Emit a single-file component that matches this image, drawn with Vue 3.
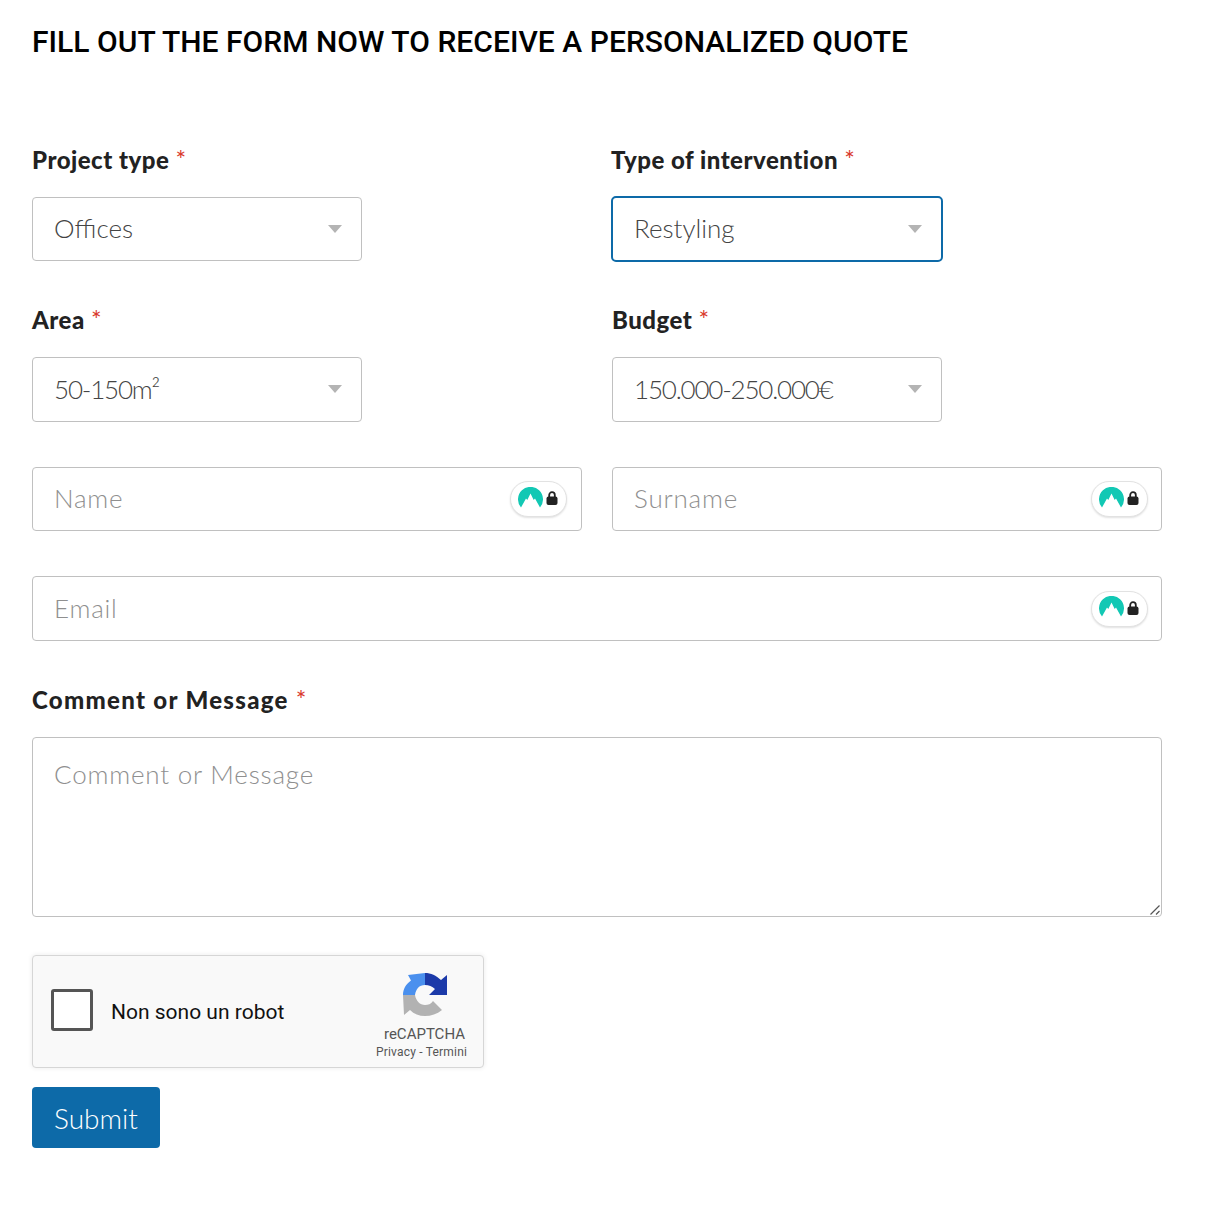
<template>
  <div class="page">
    <h2 class="title">FILL OUT THE FORM NOW TO RECEIVE A PERSONALIZED QUOTE</h2>

    <form class="quote-form" @submit.prevent>
      <div class="row selects first">
        <div v-for="f in topSelects" :key="f.label" class="field">
          <label class="label">{{ f.label }} <span class="req">*</span></label>
          <div class="select" :class="{ focused: f.focused }">
            <span class="value">{{ f.value }}</span>
            <span class="caret"></span>
          </div>
        </div>
      </div>

      <div class="row selects second">
        <div v-for="f in bottomSelects" :key="f.label" class="field">
          <label class="label">{{ f.label }} <span class="req">*</span></label>
          <div class="select">
            <span class="value tight">{{ f.value }}</span>
            <span class="caret"></span>
          </div>
        </div>
      </div>

      <div class="row inputs">
        <div v-for="name in ['Name', 'Surname']" :key="name" class="input">
          <span class="placeholder">{{ name }}</span>
          <span class="vpn-badge">
            <svg class="dome" width="25" height="21" viewBox="0 0 25 21">
              <path fill="#12c8b4" d="M3 20.500A12.500 12.500 0 1 1 22 20.500L17 11.500 15.700 13 12.500 6.500 9.300 13 8 11.500z" />
            </svg>
            <svg class="lock" width="12" height="14" viewBox="0 0 12 14">
              <path fill="none" stroke="#222" stroke-width="1.800" d="M3.200 6V4a2.800 2.800 0 0 1 5.600 0v2" />
              <rect x="0.500" y="5.500" width="11" height="8.500" rx="2" fill="#222" />
            </svg>
          </span>
        </div>
      </div>

      <div class="input email">
        <span class="placeholder">Email</span>
        <span class="vpn-badge">
          <svg class="dome" width="25" height="21" viewBox="0 0 25 21">
            <path fill="#12c8b4" d="M3 20.500A12.500 12.500 0 1 1 22 20.500L17 11.500 15.700 13 12.500 6.500 9.300 13 8 11.500z" />
          </svg>
          <svg class="lock" width="12" height="14" viewBox="0 0 12 14">
            <path fill="none" stroke="#222" stroke-width="1.800" d="M3.200 6V4a2.800 2.800 0 0 1 5.600 0v2" />
            <rect x="0.500" y="5.500" width="11" height="8.500" rx="2" fill="#222" />
          </svg>
        </span>
      </div>

      <label class="label message-label">Comment or Message <span class="req">*</span></label>
      <div class="textarea">
        <span class="placeholder">Comment or Message</span>
        <svg class="grip" width="12" height="12" viewBox="0 0 12 12">
          <path stroke="#555" stroke-width="1.200" d="M1.500 10.500 10.500 1.500M7 10.500l3.500-3.500" />
        </svg>
      </div>

      <div class="captcha">
        <span class="check"></span>
        <span class="captcha-text">Non sono un robot</span>
        <div class="captcha-brand">
          <svg width="45" height="43" viewBox="0 0 45 43">
            <path fill="#4a90ee" d="M0 22C0 16 3 11 8 7.500L5 2 22 0V12C16 12 13 16 12 22Z" />
            <path fill="#1c3aa9" d="M22 0C28 0 33 2.500 38 7L44 2V22H26L32 16C29 13.500 26 12 22 12Z" />
            <path fill="#b2b2b2" d="M0 22H12C13 28 17 32 22 32 25 32 28 31 30 28L39 37C34 41 28 43 22 43 16 43 11 41 7 37L1 42Z" />
          </svg>
          <span class="brand-name">reCAPTCHA</span>
          <span class="brand-links">Privacy - Termini</span>
        </div>
      </div>

      <button class="submit" type="submit">Submit</button>
    </form>
  </div>
</template>

<script setup>
const topSelects = [
  { label: 'Project type', value: 'Offices' },
  { label: 'Type of intervention', value: 'Restyling', focused: true }
]

const bottomSelects = [
  { label: 'Area', value: '50-150m²' },
  { label: 'Budget', value: '150.000-250.000€' }
]
</script>

<style>
html,
body {
  margin: 0;
  background: #fff;
}
</style>

<style scoped>
.page {
  padding: 0 68px 0 32px;
  font-family: 'Lato', sans-serif;
  color: #222;
}

.title {
  margin: 0;
  padding-top: 23px;
  font-family: 'Roboto', sans-serif;
  font-size: 30px;
  line-height: 37px;
  font-weight: 500;
  color: #000;
  letter-spacing: 0.04px;
}

.quote-form {
  display: flex;
  flex-direction: column;
  align-items: flex-start;
  padding-top: 84px;
}

.row {
  display: grid;
  grid-template-columns: 550px 550px;
  column-gap: 30px;
}

.first {
  margin-bottom: 43px;
}

.second {
  margin-bottom: 45px;
}

.inputs {
  margin-bottom: 45px;
}

.label {
  display: block;
  font-size: 24px;
  line-height: 30px;
  font-weight: 900;
  letter-spacing: 0.5px;
  color: #222;
}

.message-label {
  letter-spacing: 1.3px;
}

.req {
  color: #d9392c;
  font-weight: 400;
  font-size: 25px;
  letter-spacing: 0;
}

.select {
  box-sizing: border-box;
  width: 330px;
  height: 64px;
  margin-top: 22px;
  padding: 0 19px 2px 21px;
  display: flex;
  align-items: center;
  justify-content: space-between;
  border: 1px solid #c0c0c0;
  border-radius: 4px;
  font-size: 26px;
  font-weight: 300;
  color: #444;
}

.tight {
  letter-spacing: -1.2px;
}

.first .field:last-child .label {
  margin-left: -1px;
}

.second .select {
  height: 65px;
}

.select.focused {
  border: 2px solid #0d6aa8;
  border-radius: 5px;
  width: 332px;
  height: 66px;
  margin-top: 21px;
  margin-left: -1px;
  margin-bottom: -1px;
  padding: 0 19px 2px 21px;
}

.caret {
  width: 0;
  height: 0;
  border-left: 7.500px solid transparent;
  border-right: 7.500px solid transparent;
  border-top: 8px solid #b4b4b4;
  margin-top: 1px;
}

.input {
  box-sizing: border-box;
  height: 64px;
  display: flex;
  align-items: center;
  justify-content: space-between;
  padding: 0 14px 0 21px;
  border: 1px solid #c0c0c0;
  border-radius: 4px;
  background: #fff;
}

.inputs .input:last-child,
.email {
  padding-right: 13px;
}

.email {
  width: 1130px;
  height: 65px;
  margin-bottom: 43px;
}

.placeholder {
  font-size: 26px;
  font-weight: 300;
  letter-spacing: 0.8px;
  color: #8f8f8f;
  padding-bottom: 2px;
}

.vpn-badge {
  box-sizing: border-box;
  width: 57px;
  height: 36px;
  display: flex;
  align-items: center;
  gap: 3px;
  padding-left: 7px;
  border: 1px solid #e2e2e2;
  border-radius: 18px;
  box-shadow: 0 1px 2px rgba(0, 0, 0, 0.12);
  background: #fff;
}

.dome {
  margin-bottom: 4px;
}

.lock {
  margin-bottom: 2px;
}

.textarea {
  box-sizing: border-box;
  position: relative;
  width: 1130px;
  height: 180px;
  margin-top: 22px;
  padding: 20px 21px;
  border: 1px solid #c0c0c0;
  border-radius: 4px;
}

.textarea .placeholder {
  line-height: 33px;
  display: block;
  padding-bottom: 0;
}

.grip {
  position: absolute;
  right: 0;
  bottom: 0;
}

.captcha {
  box-sizing: border-box;
  position: relative;
  width: 452px;
  height: 113px;
  margin-top: 38px;
  display: flex;
  align-items: center;
  border: 1px solid #d6d6d6;
  border-radius: 4px;
  background: #f9f9f9;
  box-shadow: 0 0 4px 1px rgba(0, 0, 0, 0.06);
  font-family: 'Roboto', sans-serif;
}

.check {
  box-sizing: border-box;
  width: 42px;
  height: 42px;
  margin-left: 18px;
  margin-bottom: 4px;
  border: 3px solid #555;
  border-radius: 3px;
  background: #fff;
}

.captcha-text {
  margin-left: 18px;
  font-size: 21px;
  color: #111;
}

.captcha-brand {
  position: absolute;
  right: 12px;
  top: 17px;
  width: 92px;
  display: flex;
  flex-direction: column;
  align-items: center;
  color: #555;
}

.brand-name {
  margin-top: 9px;
  font-size: 15px;
  line-height: 18px;
  margin-right: 1px;
}

.brand-links {
  margin-top: 2px;
  margin-right: 7px;
  font-size: 12px;
  letter-spacing: 0.2px;
  line-height: 15px;
  white-space: nowrap;
}

.submit {
  width: 128px;
  height: 61px;
  margin-top: 19px;
  border: 0;
  border-radius: 4px;
  background: #0d6aa8;
  color: #fff;
  font-family: 'Lato', sans-serif;
  font-size: 28px;
  font-weight: 300;
  padding: 0;
}
</style>
